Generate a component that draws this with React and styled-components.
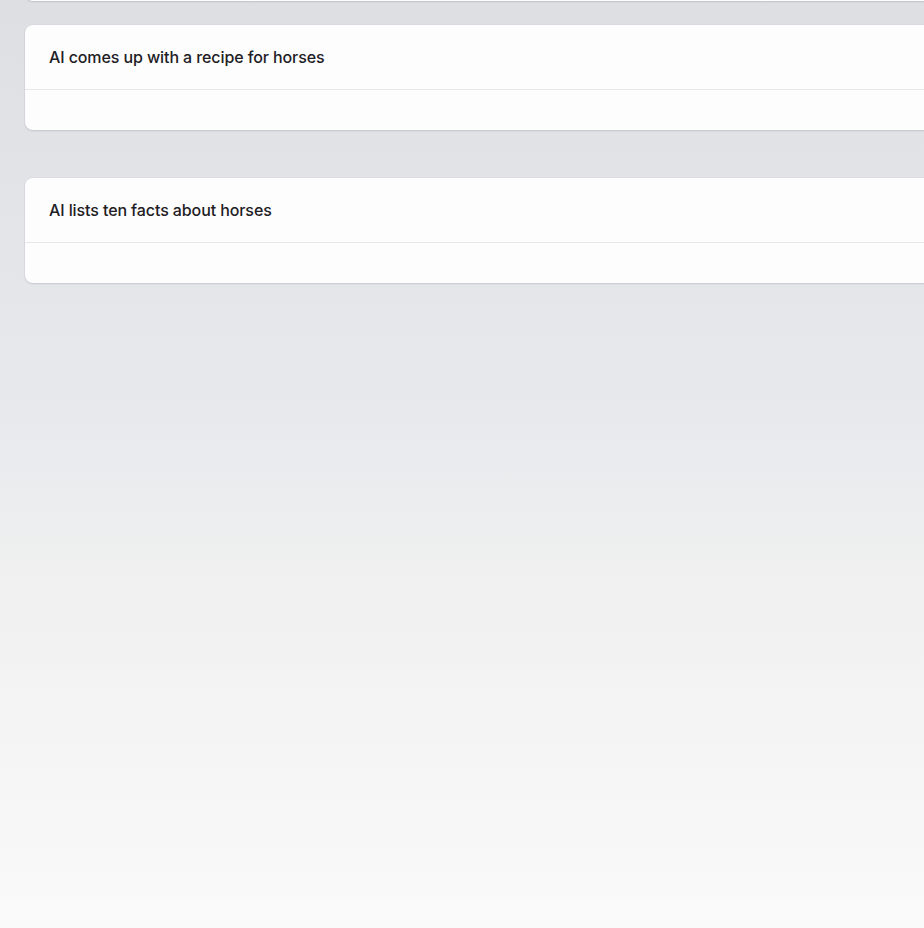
import React from "react";
import styled, { createGlobalStyle } from "styled-components";

const Global = createGlobalStyle`
  html, body { margin: 0; padding: 0; }
  body {
    min-height: 928px;
    background: linear-gradient(180deg, #dedfe3 0%, #e8e9ed 45%, #eff0ef 62%, #f5f5f5 82%, #fafafa 100%);
    font-family: Inter, "Noto Sans", sans-serif;
    overflow: hidden;
  }
`;

const Page = styled.main`
  width: 924px;
  height: 928px;
  overflow: hidden;
  padding: 0 0 0 25px;
  box-sizing: border-box;
  display: flex;
  flex-direction: column;
`;

const Card = styled.section`
  width: 1000px;
  flex: none;
  background: #fdfdfe;
  border-radius: 8px;
  box-shadow: 0 1px 2px rgba(15, 23, 42, 0.12), 0 0 0 1px rgba(15, 23, 42, 0.02);
  margin-bottom: ${(p) => p.$gap}px;
  margin-top: ${(p) => p.$top || 0}px;
`;

const Header = styled.div`
  height: 65px;
  display: flex;
  align-items: center;
  padding: 0 24px;
  border-bottom: 1px solid #e6e7ea;
  box-sizing: border-box;
`;

const Title = styled.h3`
  margin: 0;
  font-size: 16px;
  font-weight: 500;
  color: #1e2024;
  letter-spacing: -0.1px;
`;

const Body = styled.div`
  height: 40px;
`;

export default function App() {
  return (
    <>
      <Global />
      <Page>
        <Card $top={-104} $gap={24}>
          <Header />
          <Body />
        </Card>
        <Card $gap={48}>
          <Header>
            <Title>AI comes up with a recipe for horses</Title>
          </Header>
          <Body />
        </Card>
        <Card $gap={48}>
          <Header>
            <Title>AI lists ten facts about horses</Title>
          </Header>
          <Body />
        </Card>
      </Page>
    </>
  );
}
